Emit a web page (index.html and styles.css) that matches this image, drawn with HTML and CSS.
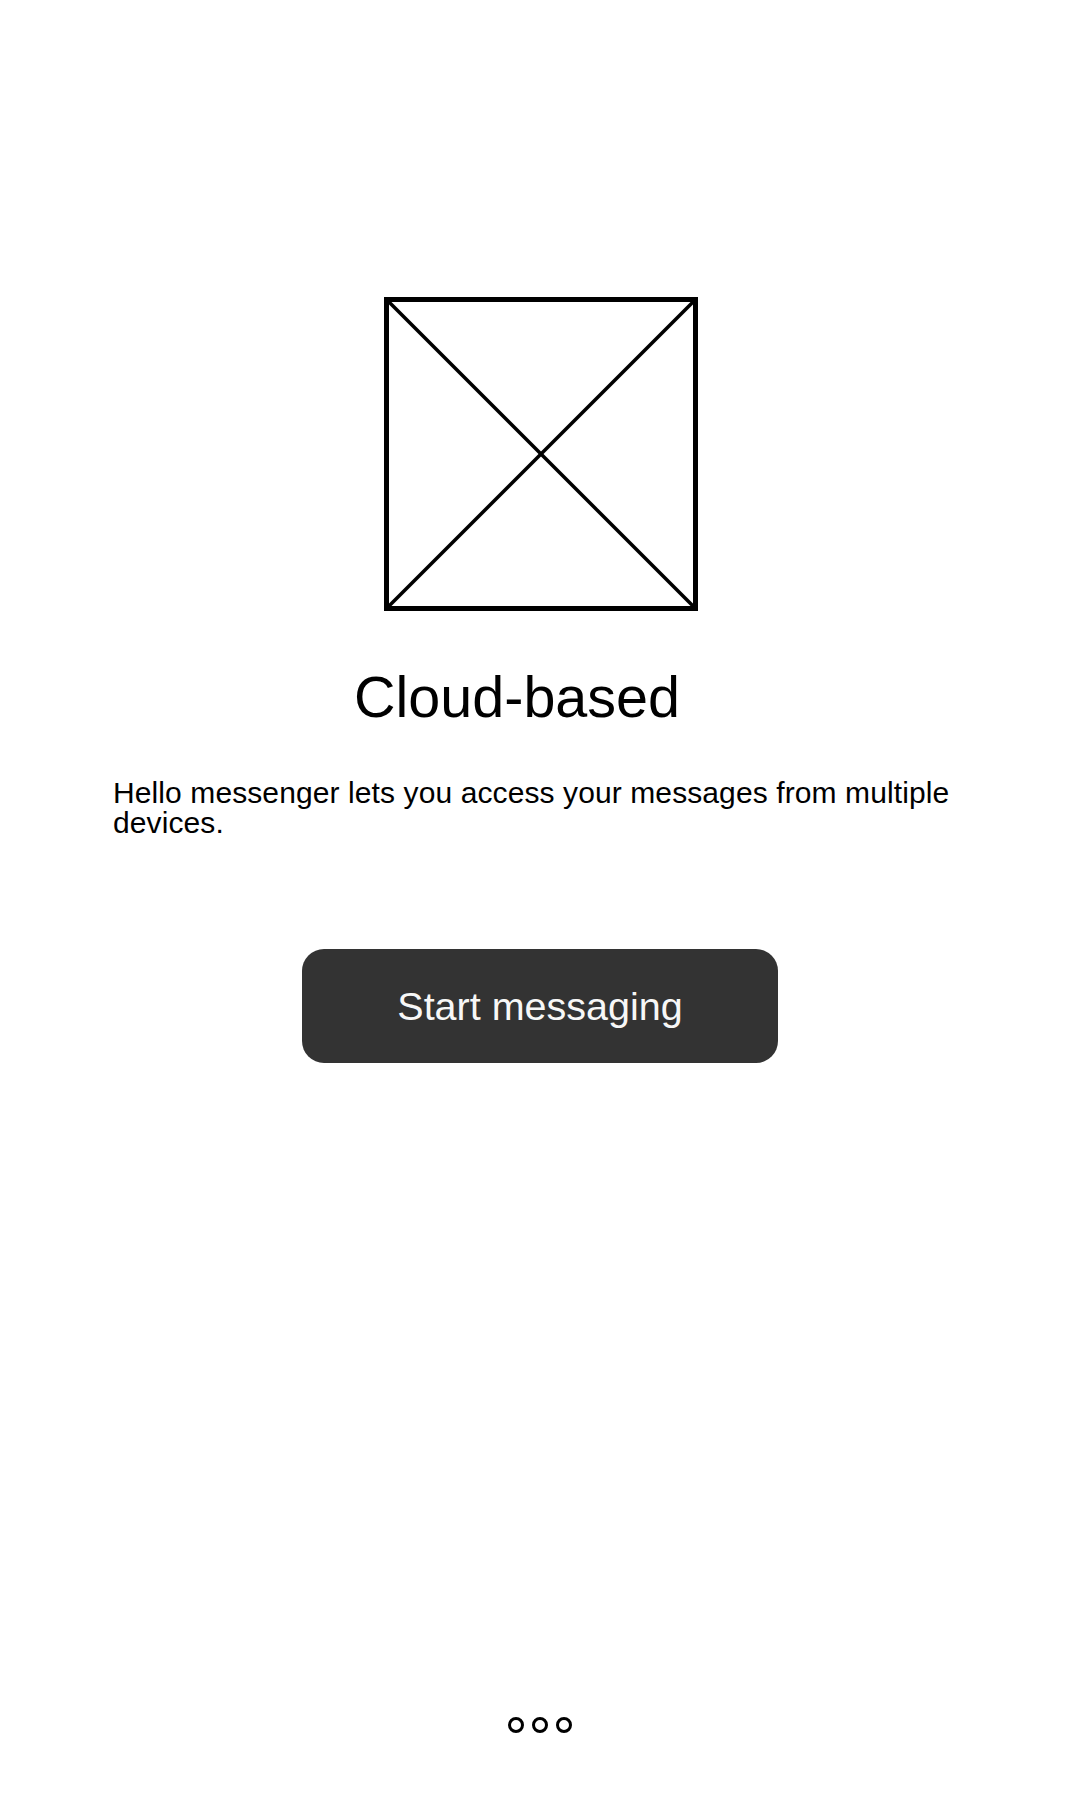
FILE: index.html
```html
<!DOCTYPE html>
<html lang="en">
<head>
<meta charset="utf-8">
<title>Cloud-based</title>
<link rel="stylesheet" href="styles.css">
</head>
<body>
<main class="screen">
  <section class="intro">
    <svg class="placeholder" viewBox="0 0 314 314" width="314" height="314" aria-hidden="true">
      <rect x="2.5" y="2.5" width="309" height="309" fill="none" stroke="#000" stroke-width="5"/>
      <line x1="3" y1="3" x2="311" y2="311" stroke="#000" stroke-width="3.5"/>
      <line x1="311" y1="3" x2="3" y2="311" stroke="#000" stroke-width="3.5"/>
    </svg>
    <h1 class="title">Cloud-based</h1>
    <p class="desc">Hello messenger lets you access your messages from multiple devices.</p>
    <button class="cta" type="button">Start messaging</button>
  </section>
  <nav class="pager" aria-label="pages">
    <span class="dot"></span>
    <span class="dot"></span>
    <span class="dot"></span>
  </nav>
</main>
</body>
</html>
```

FILE: styles.css
```css
html, body {
  margin: 0;
  padding: 0;
  background: #ffffff;
}

body {
  font-family: "Liberation Sans", Arial, sans-serif;
  color: #000;
}

.screen {
  height: 1800px;
  display: flex;
  flex-direction: column;
  box-sizing: border-box;
  padding-top: 297px;
  padding-bottom: 67px;
}

.intro {
  display: flex;
  flex-direction: column;
  align-items: center;
}

.placeholder {
  display: block;
  width: 314px;
  height: 314px;
  margin-left: 1px;
}

.title {
  align-self: flex-start;
  margin: 53px 0 0 354px;
  font-size: 57.5px;
  line-height: 66px;
  font-weight: 400;
}

.desc {
  align-self: stretch;
  margin: 48px 0 0;
  padding: 0 113px;
  font-size: 30px;
  line-height: 30px;
  letter-spacing: 0.1px;
}

.cta {
  margin-top: 111px;
  width: 476px;
  height: 114px;
  border: none;
  border-radius: 22px;
  background: #333333;
  color: #f7f7f7;
  font-family: "Liberation Sans", Arial, sans-serif;
  font-size: 39.5px;
  line-height: 45px;
  display: flex;
  align-items: center;
  justify-content: center;
  padding: 0;
}

.pager {
  margin-top: auto;
  display: flex;
  justify-content: center;
  gap: 8px;
}

.dot {
  width: 16px;
  height: 16px;
  box-sizing: border-box;
  border: 3px solid #000;
  border-radius: 50%;
}
```
